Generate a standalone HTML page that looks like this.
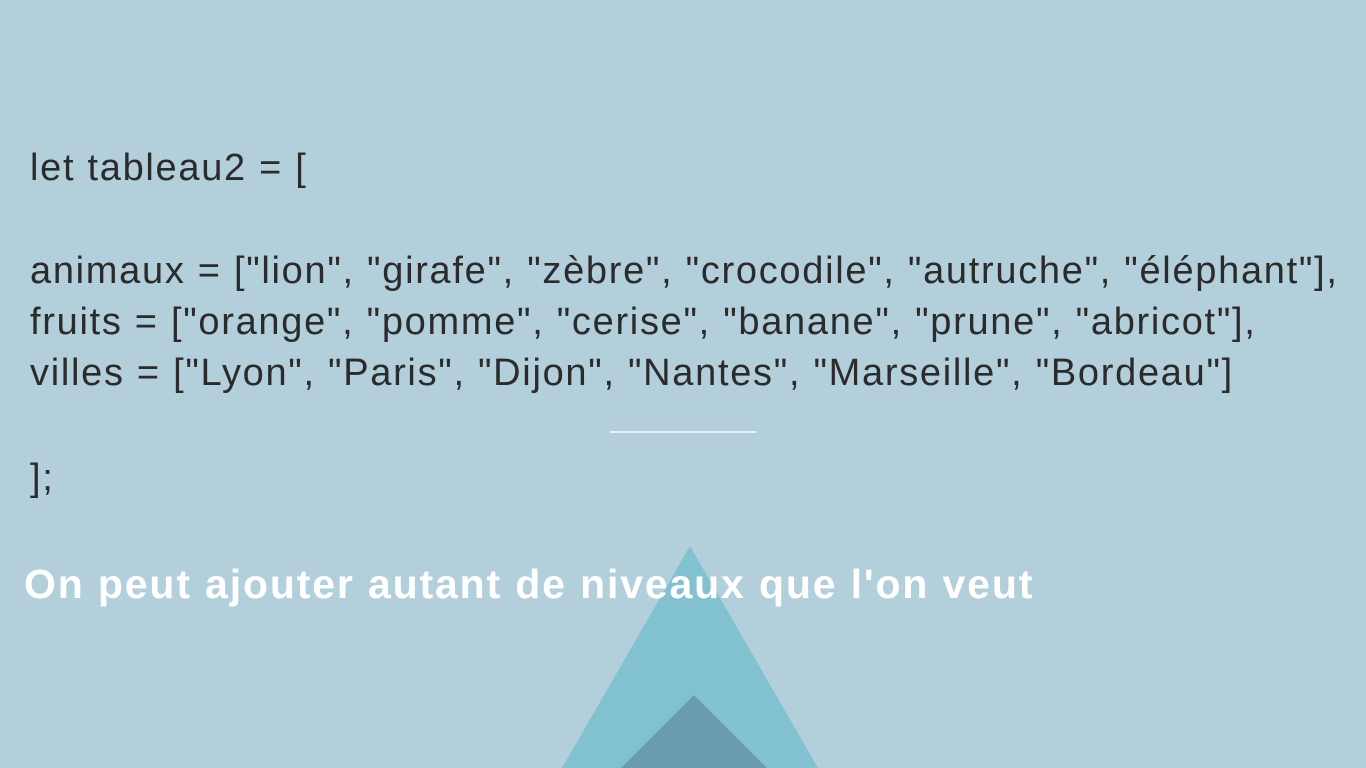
<!DOCTYPE html>
<html><head><meta charset="utf-8"><style>
html,body{margin:0;padding:0}
body{width:1366px;height:768px;background:#b2cfdb;position:relative;overflow:hidden;font-family:"Liberation Sans",sans-serif}
.c{position:absolute;left:30px;color:#2b2b2b;font-size:38px;letter-spacing:1.7px;white-space:nowrap;line-height:1}
.t{position:absolute;left:24px;top:564px;color:#fff;font-weight:bold;font-size:41px;letter-spacing:1.85px;white-space:nowrap;line-height:1}
.hr{position:absolute;left:610px;top:431px;width:146px;height:2px;background:#e8f1f4}
svg{position:absolute;left:0;top:0}
</style></head><body>
<svg width="1366" height="768"><polygon points="690,546 818,768 562,768" fill="#82c1d0"/><polygon points="694,695 767,768 621,768" fill="#6a9cad"/></svg>
<div class="c" style="top:149px">let tableau2 = [</div>
<div class="c" style="top:252px">animaux = ["lion", "girafe", "zèbre", "crocodile", "autruche", "éléphant"],</div>
<div class="c" style="top:303px">fruits = ["orange", "pomme", "cerise", "banane", "prune", "abricot"],</div>
<div class="c" style="top:354px">villes = ["Lyon", "Paris", "Dijon", "Nantes", "Marseille", "Bordeau"]</div>
<div class="hr"></div>
<div class="c" style="top:459px">];</div>
<div class="t">On peut ajouter autant de niveaux que l'on veut</div>
</body></html>
